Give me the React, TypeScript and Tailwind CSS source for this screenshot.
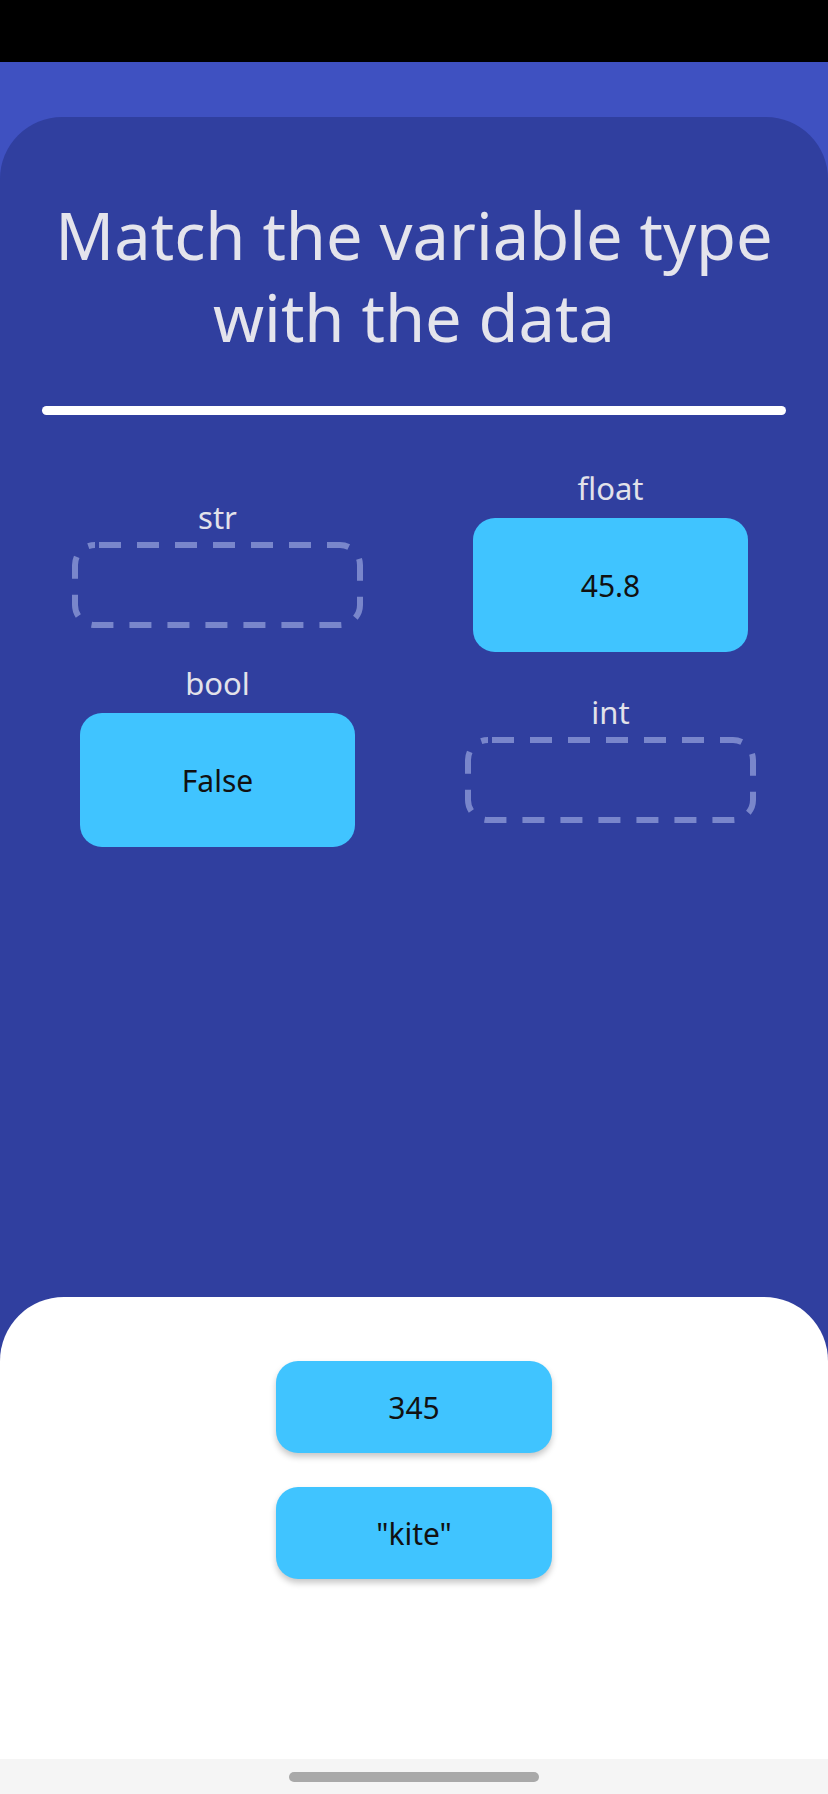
import React from 'react';

interface Slot {
  label: string;
  value?: string;
}

// Drop targets on the board, row by row
const slots: Slot[] = [
  { label: 'str' },
  { label: 'float', value: '45.8' },
  { label: 'bool', value: 'False' },
  { label: 'int' },
];

// Answers still waiting to be dragged
const choices = ['345', '"kite"'];

const font = { fontFamily: '"Noto Sans", "Open Sans", sans-serif' };

const DashedTarget = () => (
  <div className="w-[291px] h-[86px] mt-[5px]">
    <svg width="291" height="86" viewBox="0 0 291 86">
      <rect
        x="3"
        y="3"
        width="285"
        height="80"
        rx="20"
        fill="none"
        stroke="#7986cb"
        strokeWidth="6"
        strokeDasharray="22 16"
        strokeDashoffset="-4"
      />
    </svg>
  </div>
);

const SlotCell = ({ slot }: { slot: Slot }) => (
  <div className={`flex flex-col items-center ${slot.value ? '' : 'pt-[5px]'}`}>
    <div className="text-[31px] leading-[40px] text-[#e2e2ea]">{slot.label}</div>
    {slot.value ? (
      <div className="mt-[10px] w-[275px] h-[134px] rounded-[22px] bg-[#40c4ff] flex items-center justify-center text-[30px] text-[#111]">
        {slot.value}
      </div>
    ) : (
      <DashedTarget />
    )}
  </div>
);

export default function App() {
  return (
    <div className="w-[828px] h-[1794px] flex flex-col bg-white" style={font}>
      {/* status bar */}
      <div className="h-[62px] bg-black" />

      <div className="flex-1 flex flex-col bg-[#3f51c1] pt-[55px]">
        <div className="flex-1 flex flex-col bg-[#303f9f] rounded-t-[62px]">
          <h1 className="pt-[77px] px-6 text-center text-[65px] leading-[82px] text-[#e4e4ec] font-normal">
            Match the variable type
            <br />
            with the data
          </h1>

          <div className="mt-[48px] mx-[42px] h-[9px] rounded-full bg-white" />

          <div className="mt-[53px] px-[42px] grid grid-cols-2 gap-x-[42px] gap-y-[11px] items-center">
            {slots.map((slot) => (
              <SlotCell key={slot.label} slot={slot} />
            ))}
          </div>

          <div className="flex-1" />

          {/* answer tray */}
          <div className="h-[462px] bg-white rounded-t-[64px] pt-[64px] flex flex-col items-center gap-[34px]">
            {choices.map((c) => (
              <button
                key={c}
                className="w-[276px] h-[92px] rounded-[22px] bg-[#40c4ff] text-[30px] text-[#111] shadow-[0_4px_6px_rgba(0,0,0,0.22)]"
              >
                {c}
              </button>
            ))}
          </div>
        </div>
      </div>

      {/* gesture bar */}
      <div className="h-[35px] bg-[#f5f5f5] flex justify-center pt-[13px]">
        <div className="w-[250px] h-[10px] rounded-full bg-[#a9a9a9]" />
      </div>
    </div>
  );
}
